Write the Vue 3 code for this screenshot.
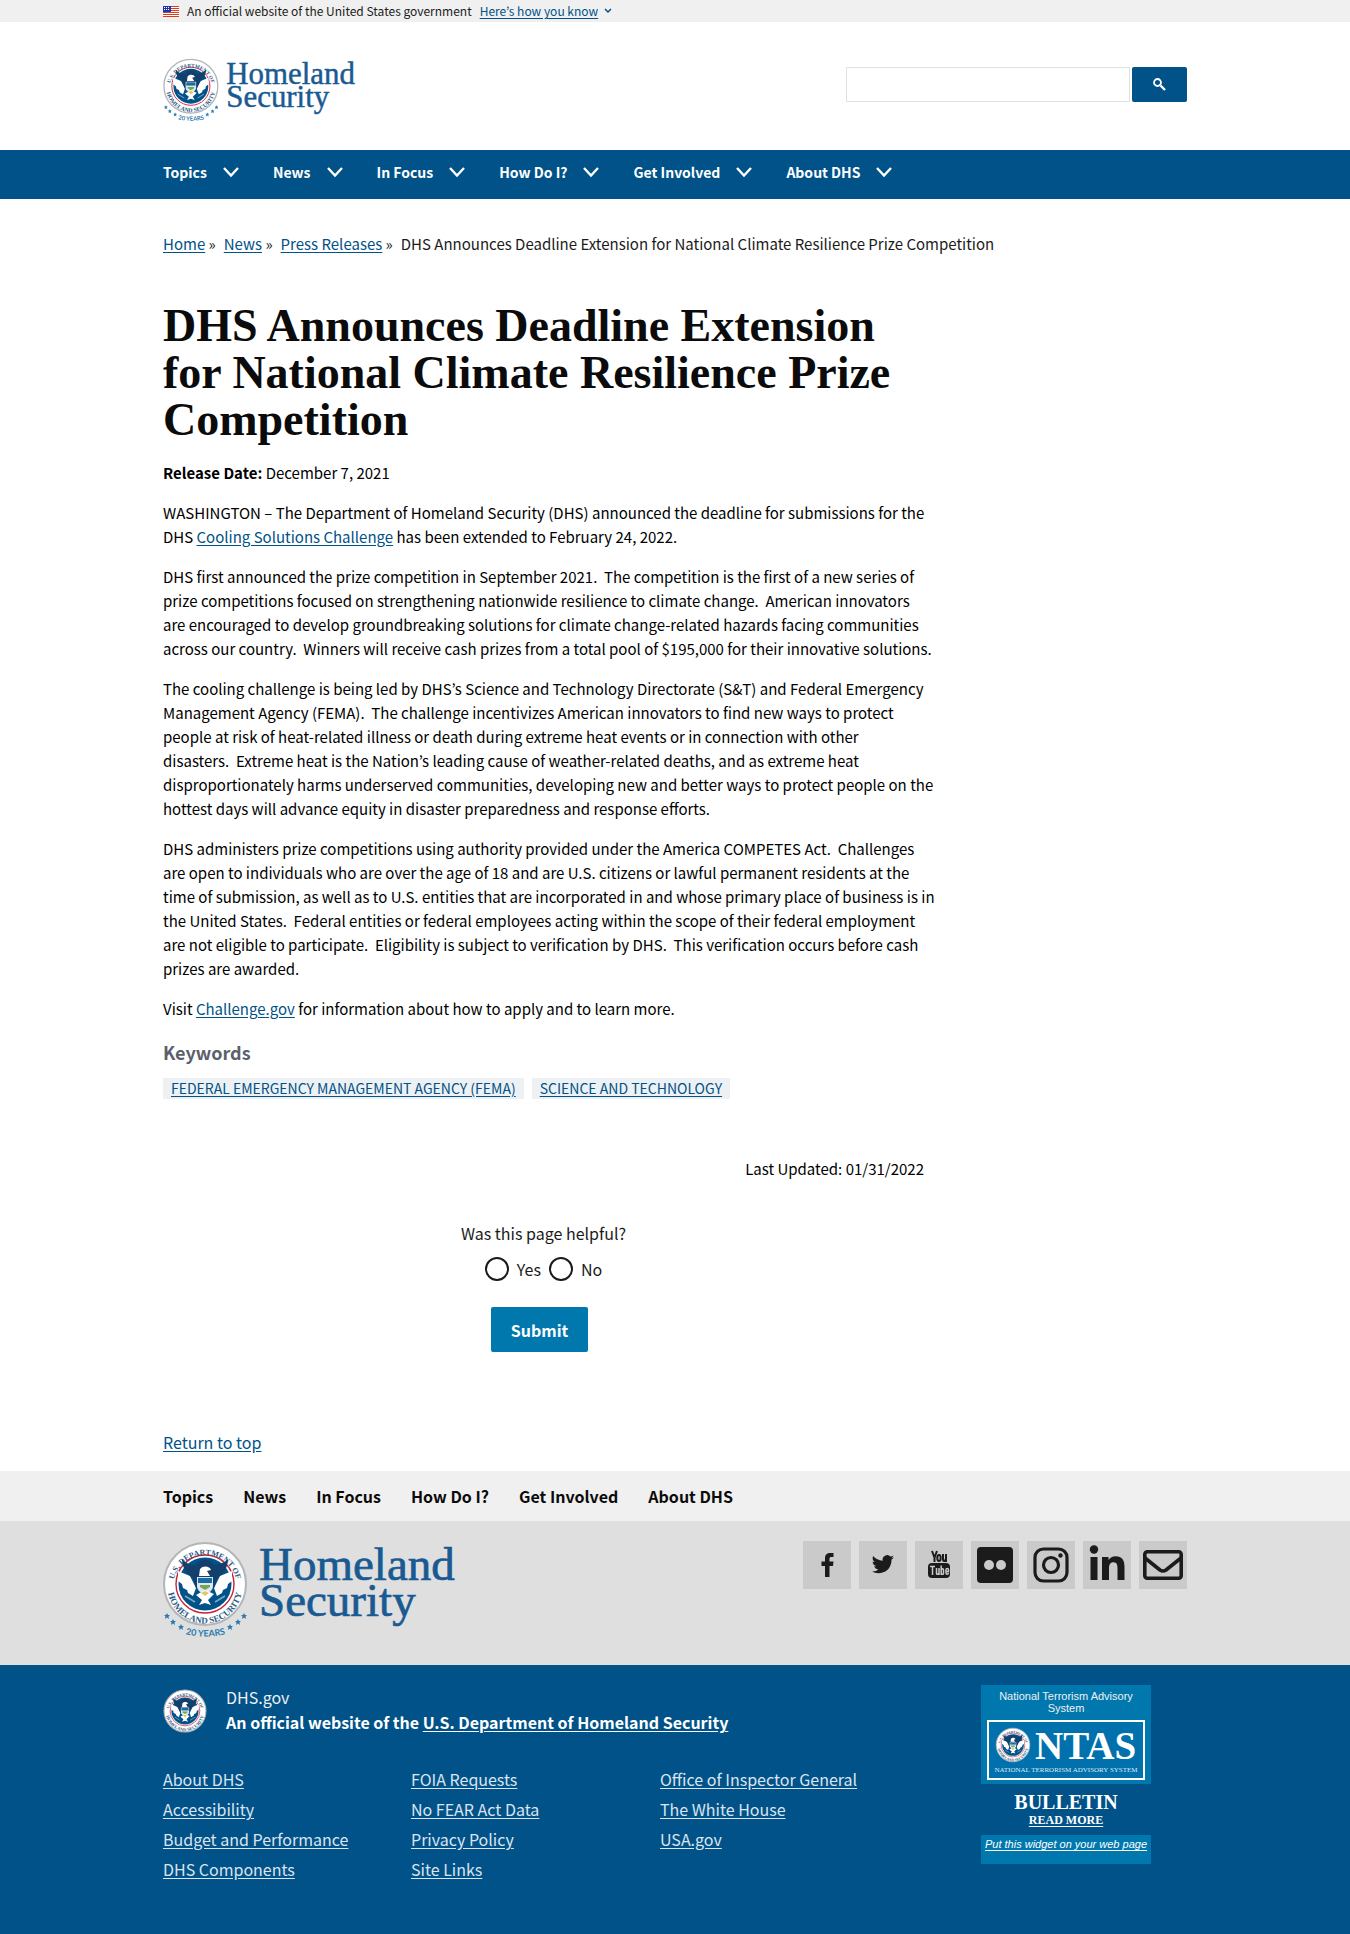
<script setup>
import { h } from 'vue'

const navItems = [
  { label: 'Topics' },
  { label: 'News' },
  { label: 'In Focus' },
  { label: 'How Do I?' },
  { label: 'Get Involved' },
  { label: 'About DHS' },
]
const crumbs = ['Home', 'News', 'Press Releases']
const tags = ['Federal Emergency Management Agency (FEMA)', 'Science and Technology']
const footerLinks = [
  ['About DHS', 'Accessibility', 'Budget and Performance', 'DHS Components'],
  ['FOIA Requests', 'No FEAR Act Data', 'Privacy Policy', 'Site Links'],
  ['Office of Inspector General', 'The White House', 'USA.gov'],
]

// Department seal, drawn around its own centre with a radius of 42.
let sealCount = 0
const Seal = {
  setup() {
    const id = 'seal' + sealCount++
    const ring = (ref, size, label) =>
      h('text', { 'font-family': 'Liberation Serif, serif', 'font-size': size, 'font-weight': 700, fill: '#2c5c84', 'text-anchor': 'middle' }, [
        h('textPath', { href: '#' + id + ref, startOffset: '50%' }, label),
      ])
    return () =>
      h('g', [
        h('circle', { r: 41, fill: '#fff', stroke: '#b3b6b8', 'stroke-width': 2 }),
        h('circle', { r: 29, fill: '#fff', stroke: '#c8203a', 'stroke-width': 1.4 }),
        h('circle', { r: 26.5, fill: '#005288' }),
        h('path', { id: id + 'a', d: 'M-32 3A32 32 0 0 1 32 3', fill: 'none' }),
        h('path', { id: id + 'b', d: 'M-37.500 2A37.500 37.500 0 0 0 37.500 2', fill: 'none' }),
        ring('a', 8, 'U.S. DEPARTMENT OF'),
        ring('b', 9, 'HOMELAND SECURITY'),
        h('path', { fill: '#fff', d: 'M-27 -13L-15 -8L-9 4L-12 12L-17 9L-18 6L-22 4L-23 0L-27 -3ZM27 -13L15 -8L9 4L12 12L17 9L18 6L22 4L23 0L27 -3Z' }),
        h('path', { fill: '#123f6b', d: 'M-23 -25C-19 -20-13 -19-9 -19C-5 -26 5 -26 9 -19C13 -19 19 -21 23 -25C23 -16 18 -10 12 -6L9 4H-9L-12 -6C-18 -10-23 -16-23 -25Z' }),
        h('path', { fill: '#fff', d: 'M-5 -15C-2 -19 5 -18 6 -14L2 -13L5 -8H-6Z' }),
        h('path', { fill: '#dce8f0', d: 'M-8 -7H8V2C8 7 3 9 0 11C-3 9-8 7-8 2Z' }),
        h('path', { fill: '#1b6ba5', d: 'M-7 -6H7V-1H-7Z' }),
        h('path', { fill: '#7aa35a', d: 'M-5 1H5V3L0 6L-5 3Z' }),
        h('path', { fill: '#fff', d: 'M-9 11L0 6L9 10L3 16L6 21L0 19L-6 21L-3 16Z' }),
        h('path', { fill: '#e0c766', d: 'M-4 9L0 7L4 9L0 12Z' }),
        h('path', { stroke: '#7da7c4', 'stroke-width': 1.5, fill: 'none', d: 'M-20 12L-10 18M20 12L10 18' }),
      ])
  },
}

const star = 'M0-3L1-1H3L1.500 .500L2 3L0 1.600L-2 3L-1.500 .500L-3-1H-1Z'
const Logo = {
  setup() {
    const id = 'years' + sealCount
    const stars = [[4, 75], [10, 81], [18, 86], [67, 86], [75, 81], [81, 75]]
    const word = (y, label) =>
      h('text', { x: 96, y, 'font-size': 47, fill: '#1a5a92', stroke: '#1a5a92', 'stroke-width': 0.7, 'font-family': 'Liberation Serif, serif' }, label)
    return () =>
      h('svg', { viewBox: '0 0 296 102', role: 'img', 'aria-label': 'Homeland Security' }, [
        h('g', { transform: 'translate(42 43)' }, [h(Seal)]),
        ...stars.map(([x, y]) => h('path', { d: star, fill: '#2b7bb0', transform: `translate(${x} ${y})` })),
        h('path', { id, d: 'M18 92Q42.500 99 67 92', fill: 'none' }),
        h('text', { 'font-size': 9, 'font-weight': 700, fill: '#2b7bb0', 'font-family': 'Lato, sans-serif', 'text-anchor': 'middle' }, [
          h('textPath', { href: '#' + id, startOffset: '50%' }, '20 YEARS'),
        ]),
        word(39, 'Homeland'),
        word(75, 'Security'),
      ])
  },
}
</script>

<template>
  <div id="top" class="page">
    <div class="banner">
      <div class="wrap banner-row">
        <svg class="flag" viewBox="0 0 16 11" aria-hidden="true">
          <rect width="16" height="11" fill="#fff" />
          <path d="M0 .5H16M0 2.500H16M0 4.500H16M0 6.500H16M0 8.500H16M0 10.500H16" stroke="#db3e1f" />
          <rect width="8" height="6" fill="#1e33b1" />
          <path d="M1 1.500H7M1 3.500H7" stroke="#fff" stroke-dasharray="1 1" />
        </svg>
        <span>An official website of the United States government</span>
        <button type="button" class="banner-btn">
          <span>Here’s how you know</span>
          <svg viewBox="0 0 8 6" aria-hidden="true"><path d="M1 1L4 4L7 1" fill="none" stroke="#005288" stroke-width="1.500" /></svg>
        </button>
      </div>
    </div>

    <header class="wrap masthead">
      <a href="#top" class="brand"><Logo /></a>
      <form class="search" role="search" @submit.prevent>
        <input type="search" aria-label="Search" />
        <button type="submit" aria-label="Search">
          <svg viewBox="0 0 13 13" aria-hidden="true"><circle cx="4.500" cy="4.500" r="3.500" fill="none" stroke="#fff" stroke-width="1.800" /><path d="M7.500 7.500L12 12" stroke="#fff" stroke-width="2.400" /></svg>
        </button>
      </form>
    </header>

    <nav class="main-nav" aria-label="Primary">
      <ul class="wrap">
        <li v-for="item in navItems" :key="item.label">
          <button type="button">
            <span>{{ item.label }}</span>
            <svg viewBox="0 0 16 10" aria-hidden="true"><path d="M1 1L8 8.500L15 1" fill="none" stroke="#fff" stroke-width="2.400" /></svg>
          </button>
        </li>
      </ul>
    </nav>

    <main class="wrap">
      <nav class="crumbs" aria-label="Breadcrumb">
        <span v-for="crumb in crumbs" :key="crumb"><a href="#">{{ crumb }}</a> »</span>
        <span>DHS Announces Deadline Extension for National Climate Resilience Prize Competition</span>
      </nav>

      <article>
        <h1>DHS Announces Deadline Extension<br />for National Climate Resilience Prize<br />Competition</h1>
        <p><strong>Release Date:</strong> December 7, 2021</p>
        <p>WASHINGTON – The Department of Homeland Security (DHS) announced the deadline for submissions for the<br />DHS <a href="#">Cooling Solutions Challenge</a> has been extended to February 24, 2022.</p>
        <p>DHS first announced the prize competition in September 2021.&nbsp; The competition is the first of a new series of<br />prize competitions focused on strengthening nationwide resilience to climate change.&nbsp; American innovators<br />are encouraged to develop groundbreaking solutions for climate change-related hazards facing communities<br />across our country.&nbsp; Winners will receive cash prizes from a total pool of $195,000 for their innovative solutions.</p>
        <p>The cooling challenge is being led by DHS’s Science and Technology Directorate (S&amp;T) and Federal Emergency<br />Management Agency (FEMA).&nbsp; The challenge incentivizes American innovators to find new ways to protect<br />people at risk of heat-related illness or death during extreme heat events or in connection with other<br />disasters.&nbsp; Extreme heat is the Nation’s leading cause of weather-related deaths, and as extreme heat<br />disproportionately harms underserved communities, developing new and better ways to protect people on the<br />hottest days will advance equity in disaster preparedness and response efforts.</p>
        <p>DHS administers prize competitions using authority provided under the America COMPETES Act.&nbsp; Challenges<br />are open to individuals who are over the age of 18 and are U.S. citizens or lawful permanent residents at the<br />time of submission, as well as to U.S. entities that are incorporated in and whose primary place of business is in<br />the United States.&nbsp; Federal entities or federal employees acting within the scope of their federal employment<br />are not eligible to participate.&nbsp; Eligibility is subject to verification by DHS.&nbsp; This verification occurs before cash<br />prizes are awarded.</p>
        <p>Visit <a href="#">Challenge.gov</a> for information about how to apply and to learn more.</p>

        <h2>Keywords</h2>
        <ul class="tags">
          <li v-for="tag in tags" :key="tag"><a href="#">{{ tag }}</a></li>
        </ul>
        <p class="updated">Last Updated: 01/31/2022</p>

        <form class="survey" @submit.prevent>
          <fieldset>
            <legend>Was this page helpful?</legend>
            <div class="choices">
              <label><input type="radio" name="helpful" value="yes" /> <span>Yes</span></label>
              <label><input type="radio" name="helpful" value="no" /> <span>No</span></label>
            </div>
          </fieldset>
          <button type="submit">Submit</button>
        </form>
      </article>

      <a href="#top" class="return">Return to top</a>
    </main>

    <footer>
      <nav class="foot-nav" aria-label="Footer">
        <ul class="wrap">
          <li v-for="item in navItems" :key="item.label"><a href="#">{{ item.label }}</a></li>
        </ul>
      </nav>

      <div class="foot-brand">
        <div class="wrap">
          <a href="#top" class="brand-large"><Logo /></a>
          <div class="social">
            <a href="#" aria-label="Facebook"><svg viewBox="0 0 48 48"><path fill="#1b1b1b" d="M22 36V25H18.500V20.500H22V17.500C22 13.500 24 12 27.500 12H30.500V16H28.500C27 16 26.500 16.500 26.500 18V20.500H30.500L30 25H26.500V36Z" /></svg></a>
            <a href="#" aria-label="Twitter"><svg viewBox="0 0 48 48"><path fill="#1b1b1b" d="M35 16.300c-.8.400-1.700.600-2.600.700 1-.600 1.600-1.400 2-2.500-.900.500-1.900.900-2.900 1.100a4.600 4.600 0 0 0-7.800 4.200c-3.800-.200-7.200-2-9.500-4.800-1.200 2.200-.600 4.700 1.500 6.100-.8 0-1.500-.2-2.100-.6 0 2.200 1.500 4.200 3.700 4.600-.7.200-1.400.2-2.100.1.600 1.800 2.300 3.100 4.300 3.200a9.200 9.200 0 0 1-6.800 1.900c6.200 4 19.500 2.400 19.900-11.700.9-.600 1.700-1.400 2.400-2.300z" /></svg></a>
            <a href="#" aria-label="YouTube"><svg viewBox="0 0 48 48"><g fill="none" stroke="#1b1b1b" stroke-width="2"><path d="M17 10L19.500 16.500L22 10M19.500 16V21" /><ellipse cx="24" cy="17" rx="1.700" ry="3" /><path d="M28 13V18.500Q28 20 29 20T31 18M31 13V21" /></g><rect x="13" y="22" width="22" height="15" rx="4" fill="#1b1b1b" /><g fill="none" stroke="#cacaca" stroke-width="1.500"><path d="M15 25.500H20M17.500 25.500V34M21.500 27V32Q21.500 33.500 22.500 33.300T24 32M24 27V34M26.200 24.500V34M26.200 28.500Q28.500 27 28.500 29V32Q28.500 34 26.200 33M31 30.500H33.500V29Q33.500 27.500 32.200 27.500T31 29V32Q31 33.300 32.200 33.300T33.500 31.800" /></g></svg></a>
            <a href="#" aria-label="Flickr"><svg viewBox="0 0 48 48"><rect x="6" y="6" width="36" height="36" rx="4" fill="#1b1b1b" /><circle cx="18" cy="24" r="5" fill="#cacaca" /><circle cx="30" cy="24" r="5" fill="#cacaca" /></svg></a>
            <a href="#" aria-label="Instagram"><svg viewBox="0 0 48 48"><g fill="none" stroke="#1b1b1b" stroke-width="3.200"><rect x="8" y="8" width="32" height="32" rx="8.500" /><circle cx="24" cy="24" r="7.500" /></g><circle cx="33.500" cy="14.500" r="2.200" fill="#1b1b1b" /></svg></a>
            <a href="#" aria-label="LinkedIn"><svg viewBox="0 0 48 48"><g fill="#1b1b1b"><circle cx="11" cy="8.500" r="4.200" /><path d="M7.500 16H14.500V39H7.500ZM19 16H25.500V19C27 16.500 29.500 15.200 32.500 15.200C39.500 15.200 41.500 19.500 41.500 26V39H34.500V27.500C34.500 24 34 21.200 30.500 21.200C27 21.200 26 23.700 26 27.500V39H19Z" /></g></svg></a>
            <a href="#" aria-label="Email"><svg viewBox="0 0 48 48"><g fill="none" stroke="#1b1b1b" stroke-width="3.600" stroke-linejoin="round"><rect x="5.800" y="10.800" width="36.400" height="26.400" rx="2.500" /><path d="M6 17L21 29Q24 31 27 29L42 17" /></g></svg></a>
          </div>
        </div>
      </div>

      <div class="foot-base">
        <div class="wrap">
          <div class="foot-info">
            <div class="identity">
              <svg class="seal" viewBox="-43 -43 86 86" role="img" aria-label="U.S. Department of Homeland Security seal"><Seal /></svg>
              <div>
                <div>DHS.gov</div>
                <strong>An official website of the <a href="#">U.S. Department of Homeland Security</a></strong>
              </div>
            </div>
            <div class="columns">
              <ul v-for="(column, i) in footerLinks" :key="i">
                <li v-for="link in column" :key="link"><a href="#">{{ link }}</a></li>
              </ul>
            </div>
          </div>

          <aside class="ntas">
            <div class="ntas-top">
              <div>National Terrorism Advisory System</div>
              <svg viewBox="0 0 158 60" role="img" aria-label="NTAS">
                <rect x="1" y="1" width="156" height="58" fill="#0071ad" stroke="#fff" stroke-width="2" />
                <g transform="translate(26 25) scale(.410)"><Seal /></g>
                <text x="48" y="39" font-size="39" font-weight="700" fill="#fff" font-family="Liberation Serif, serif">NTAS</text>
                <text x="79" y="52" font-size="7" fill="#dcebf3" text-anchor="middle" font-family="Liberation Serif, serif">NATIONAL TERRORISM ADVISORY SYSTEM</text>
              </svg>
            </div>
            <div class="bulletin">
              <strong>BULLETIN</strong>
              <a href="#">READ MORE</a>
            </div>
            <div class="ntas-end"><a href="#">Put this widget on your web page</a></div>
          </aside>
        </div>
      </div>
    </footer>
  </div>
</template>

<style>
body {
  margin: 0;
  background: #fff;
}
</style>

<style scoped>
.page {
  font-family: "Noto Sans CJK KR", "Noto Sans", sans-serif;
  font-size: 15px;
  line-height: 24px;
  color: #1b1b1b;
}
* {
  box-sizing: border-box;
}
.wrap {
  max-width: 1024px;
  margin: 0 auto;
}
ul {
  list-style: none;
  margin: 0;
  padding: 0;
}
a {
  color: #005288;
  text-underline-offset: 2px;
}
button,
input {
  font: inherit;
}
svg {
  display: block;
}

.banner {
  background: #f0f0f0;
}
.banner-row {
  display: flex;
  align-items: center;
  height: 22px;
  gap: 8px;
  font-size: 12px;
  line-height: 22px;
}
.flag {
  width: 16px;
  height: 11px;
}
.banner-btn {
  display: flex;
  align-items: center;
  gap: 6px;
  padding: 0;
  border: 0;
  background: none;
  color: #005288;
}
.banner-btn span {
  text-decoration: underline;
  text-underline-offset: 2px;
}
.banner-btn svg {
  width: 8px;
  height: 6px;
}

.masthead {
  display: flex;
  justify-content: space-between;
  align-items: flex-start;
  height: 128px;
  padding-top: 36px;
}
.brand svg {
  width: 195px;
  height: 67px;
}
.search {
  display: flex;
  gap: 2px;
  margin-top: 9px;
}
.search input {
  width: 284px;
  height: 35px;
  padding: 0 8px;
  border: 1px solid #dfe1e5;
  background: #fff;
}
.search button {
  display: grid;
  place-items: center;
  width: 55px;
  height: 35px;
  padding: 0;
  border: 0;
  border-radius: 2px;
  background: #005288;
}
.search svg {
  width: 13px;
  height: 13px;
}

.main-nav {
  background: #005288;
}
.main-nav ul {
  display: flex;
  gap: 34px;
}
.main-nav button {
  display: flex;
  align-items: center;
  gap: 16px;
  height: 49px;
  padding: 0 0 5px;
  border: 0;
  background: none;
  color: #fff;
  font-size: 14px;
  font-weight: 700;
}
.main-nav svg {
  width: 16px;
  height: 10px;
}

.crumbs {
  display: flex;
  flex-wrap: wrap;
  gap: 8px;
  padding-top: 33px;
}
article {
  max-width: 761px;
  color: #000;
}
h1 {
  margin: 46px 0 18px;
  font-family: "Liberation Serif", serif;
  font-size: 46px;
  line-height: 47px;
  font-weight: 700;
  color: #0b0b0b;
}
p {
  margin: 16px 0;
  white-space: nowrap;
}
h2 {
  margin: 19px 0 14px;
  font-size: 18px;
  line-height: 24px;
  font-weight: 700;
  color: #5b616b;
}
.tags {
  display: flex;
  gap: 8px;
}
.tags li {
  padding: 0 8px;
  background: #edf1f3;
  font-size: 14px;
  line-height: 21px;
  text-transform: uppercase;
}
.updated {
  margin: 58px 0 0;
  text-align: right;
}
.survey {
  display: flex;
  flex-direction: column;
  align-items: center;
  margin-top: 40px;
  font-size: 16px;
  color: #1b1b1b;
}
.survey fieldset {
  margin: 0;
  padding: 0;
  border: 0;
}
.survey legend {
  padding: 0;
}
.choices {
  display: flex;
  justify-content: center;
  gap: 8px;
  margin-top: 12px;
}
.choices label {
  display: flex;
  align-items: center;
  gap: 8px;
}
.choices input {
  appearance: none;
  width: 24px;
  height: 24px;
  margin: 0;
  border: 2px solid #1b1b1b;
  border-radius: 50%;
  background: #fff;
}
.survey button {
  height: 45px;
  margin: 26px 8px 0 0;
  padding: 0 20px;
  border: 0;
  border-radius: 2px;
  background: #0078ae;
  color: #fff;
  font-weight: 700;
}
.return {
  display: table;
  margin: 78px 0 17px;
  font-size: 16px;
}

.foot-nav {
  background: #f0f0f0;
}
.foot-nav ul {
  display: flex;
  gap: 30px;
  height: 50px;
  align-items: center;
  font-size: 16px;
  font-weight: 700;
}
.foot-nav a {
  color: #0b0b0b;
  text-decoration: none;
}
.foot-brand {
  background: #dfdfdf;
}
.foot-brand .wrap {
  display: flex;
  justify-content: space-between;
  height: 144px;
  padding-top: 20px;
}
.brand-large svg {
  width: 296px;
  height: 102px;
}
.social {
  display: flex;
  gap: 8px;
}
.social a {
  width: 48px;
  height: 48px;
  background: #cacaca;
}
.foot-base {
  background: #005288;
  color: #f0f0f0;
  font-size: 16px;
}
.foot-base a {
  color: #dce4ef;
}
.foot-base .wrap {
  display: flex;
  justify-content: space-between;
  min-height: 269px;
  padding: 20px 36px 0 0;
}
.identity {
  display: flex;
  gap: 19px;
  line-height: 25px;
}
.identity strong,
.identity strong a {
  color: #fff;
}
.identity .seal {
  width: 44px;
  height: 44px;
  margin-top: 4px;
}
.columns {
  display: grid;
  grid-template-columns: 248px 249px auto;
  margin-top: 29px;
  line-height: 30px;
}
.ntas {
  width: 170px;
  font-family: "Liberation Sans", Arial, sans-serif;
  font-size: 11px;
  line-height: 12px;
  text-align: center;
}
.ntas a {
  color: #fff;
}
.ntas-top {
  height: 99px;
  padding: 5px 6px;
  background: #0078ae;
}
.ntas-top svg {
  margin-top: 6px;
}
.bulletin {
  display: flex;
  flex-direction: column;
  align-items: center;
  height: 51px;
  padding-top: 9px;
  font-family: "Liberation Serif", serif;
}
.bulletin strong {
  font-size: 20px;
  line-height: 18px;
  color: #fff;
}
.bulletin a {
  font-size: 12px;
  line-height: 18px;
  font-weight: 700;
}
.ntas-end {
  height: 29px;
  padding-top: 3px;
  background: #0078ae;
  font-style: italic;
}
</style>
